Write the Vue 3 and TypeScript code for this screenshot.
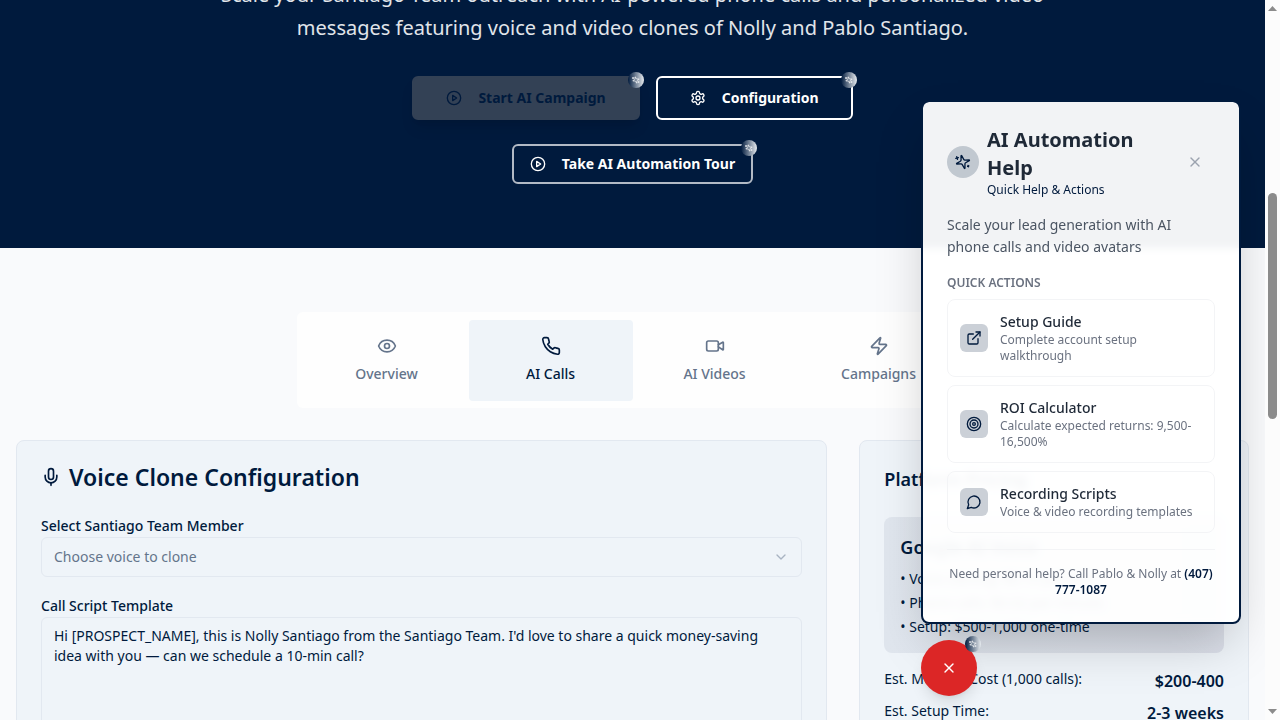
<script setup lang="ts">
import { ref } from 'vue'

interface Item {
  title: string
  detail: string
  icon: string[]
}

const icons: Record<string, string[]> = {
  play: ['M12 2a10 10 0 1 0 0 20 10 10 0 0 0 0-20Z', 'M10 8l6 4-6 4Z'],
  gear: [
    'M12.22 2h-.44a2 2 0 0 0-2 2v.18a2 2 0 0 1-1 1.73l-.43.25a2 2 0 0 1-2 0l-.15-.08a2 2 0 0 0-2.73.73l-.22.38a2 2 0 0 0 .73 2.73l.15.1a2 2 0 0 1 1 1.72v.51a2 2 0 0 1-1 1.74l-.15.09a2 2 0 0 0-.73 2.73l.22.38a2 2 0 0 0 2.73.73l.15-.08a2 2 0 0 1 2 0l.43.25a2 2 0 0 1 1 1.73V20a2 2 0 0 0 2 2h.44a2 2 0 0 0 2-2v-.18a2 2 0 0 1 1-1.73l.43-.25a2 2 0 0 1 2 0l.15.08a2 2 0 0 0 2.73-.73l.22-.39a2 2 0 0 0-.73-2.73l-.15-.08a2 2 0 0 1-1-1.74v-.5a2 2 0 0 1 1-1.74l.15-.09a2 2 0 0 0 .73-2.73l-.22-.38a2 2 0 0 0-2.73-.73l-.15.08a2 2 0 0 1-2 0l-.43-.25a2 2 0 0 1-1-1.73V4a2 2 0 0 0-2-2z',
    'M12 9a3 3 0 1 0 0 6 3 3 0 0 0 0-6Z',
  ],
  eye: [
    'M2.062 12.348a1 1 0 0 1 0-.696 10.75 10.75 0 0 1 19.876 0 1 1 0 0 1 0 .696 10.75 10.75 0 0 1-19.876 0',
    'M12 9a3 3 0 1 0 0 6 3 3 0 0 0 0-6Z',
  ],
  phone: [
    'M22 16.92v3a2 2 0 0 1-2.18 2 19.79 19.79 0 0 1-8.63-3.07 19.5 19.5 0 0 1-6-6 19.79 19.79 0 0 1-3.07-8.67A2 2 0 0 1 4.11 2h3a2 2 0 0 1 2 1.72 12.84 12.84 0 0 0 .7 2.81 2 2 0 0 1-.45 2.11L8.09 9.91a16 16 0 0 0 6 6l1.27-1.27a2 2 0 0 1 2.11-.45 12.84 12.84 0 0 0 2.81.7A2 2 0 0 1 22 16.92z',
  ],
  video: [
    'm16 13 5.223 3.482a.5.5 0 0 0 .777-.416V7.87a.5.5 0 0 0-.752-.432L16 10.5',
    'M4 6h10a2 2 0 0 1 2 2v8a2 2 0 0 1-2 2H4a2 2 0 0 1-2-2V8a2 2 0 0 1 2-2Z',
  ],
  zap: [
    'M4 14a1 1 0 0 1-.78-1.63l9.9-10.2a.5.5 0 0 1 .86.46l-1.92 6.02A1 1 0 0 0 13 10h7a1 1 0 0 1 .78 1.63l-9.9 10.2a.5.5 0 0 1-.86-.46l1.92-6.02A1 1 0 0 0 11 14z',
  ],
  mic: ['M12 2a3 3 0 0 0-3 3v7a3 3 0 0 0 6 0V5a3 3 0 0 0-3-3Z', 'M19 10v2a7 7 0 0 1-14 0v-2', 'M12 19v3'],
  external: ['M15 3h6v6', 'M10 14 21 3', 'M18 13v6a2 2 0 0 1-2 2H5a2 2 0 0 1-2-2V8a2 2 0 0 1 2-2h6'],
  target: [
    'M12 2a10 10 0 1 0 0 20 10 10 0 0 0 0-20Z',
    'M12 6a6 6 0 1 0 0 12 6 6 0 0 0 0-12Z',
    'M12 10a2 2 0 1 0 0 4 2 2 0 0 0 0-4Z',
  ],
  message: ['M7.9 20A9 9 0 1 0 4 16.1L2 22Z'],
  close: ['M18 6 6 18', 'm6 6 12 12'],
  chevron: ['m6 9 6 6 6-6'],
  sparkles: [
    'M9.937 15.5A2 2 0 0 0 8.5 14.063l-6.135-1.582a.5.5 0 0 1 0-.962L8.5 9.936A2 2 0 0 0 9.937 8.5l1.582-6.135a.5.5 0 0 1 .963 0L14.063 8.5A2 2 0 0 0 15.5 9.937l6.135 1.581a.5.5 0 0 1 0 .964L15.5 14.063a2 2 0 0 0-1.437 1.437l-1.582 6.135a.5.5 0 0 1-.963 0z',
    'M20 3v4',
    'M22 5h-4',
    'M4 17v2',
    'M5 18H3',
  ],
}

const tabs = [
  { label: 'Overview', icon: icons.eye },
  { label: 'AI Calls', icon: icons.phone },
  { label: 'AI Videos', icon: icons.video },
  { label: 'Campaigns', icon: icons.zap },
]
const activeTab = ref('AI Calls')

const actions: Item[] = [
  { title: 'Setup Guide', detail: 'Complete account setup walkthrough', icon: icons.external },
  { title: 'ROI Calculator', detail: 'Calculate expected returns: 9,500-16,500%', icon: icons.target },
  { title: 'Recording Scripts', detail: 'Voice & video recording templates', icon: icons.message },
]

const script = ref(
  "Hi [PROSPECT_NAME], this is Nolly Santiago from the Santiago Team. I'd love to share a quick money-saving idea with you — can we schedule a 10-min call?",
)
const voice = ref('')
</script>

<template>
  <div class="window">
    <div class="page">
      <section class="hero">
        <p class="lead">
          Scale your Santiago Team outreach with AI-powered phone calls and personalized video messages featuring voice
          and video clones of Nolly and Pablo Santiago.
        </p>
        <div class="hero-row">
          <button class="btn btn-start" type="button">
            <svg class="i16" viewBox="0 0 24 24"><path v-for="d in icons.play" :key="d" :d="d" /></svg>
            Start AI Campaign
            <span class="badge"><svg viewBox="0 0 24 24"><path v-for="d in icons.sparkles" :key="d" :d="d" /></svg></span>
          </button>
          <button class="btn btn-config" type="button">
            <svg class="i16" viewBox="0 0 24 24"><path v-for="d in icons.gear" :key="d" :d="d" /></svg>
            Configuration
            <span class="badge"><svg viewBox="0 0 24 24"><path v-for="d in icons.sparkles" :key="d" :d="d" /></svg></span>
          </button>
        </div>
        <button class="btn btn-tour" type="button">
          <svg class="i16" viewBox="0 0 24 24"><path v-for="d in icons.play" :key="d" :d="d" /></svg>
          Take AI Automation Tour
          <span class="badge"><svg viewBox="0 0 24 24"><path v-for="d in icons.sparkles" :key="d" :d="d" /></svg></span>
        </button>
      </section>

      <main class="main">
        <div class="tabs" role="tablist">
          <button
            v-for="tab in tabs"
            :key="tab.label"
            class="tab"
            :class="{ active: tab.label === activeTab }"
            type="button"
            role="tab"
            :aria-selected="tab.label === activeTab"
            @click="activeTab = tab.label"
          >
            <svg class="i20" viewBox="0 0 24 24"><path v-for="d in tab.icon" :key="d" :d="d" /></svg>
            {{ tab.label }}
          </button>
        </div>

        <div class="cards">
          <section class="card wide">
            <h2 class="card-title">
              <svg class="i20" viewBox="0 0 24 24"><path v-for="d in icons.mic" :key="d" :d="d" /></svg>
              Voice Clone Configuration
            </h2>
            <div class="field">
              <label for="voice">Select Santiago Team Member</label>
              <div class="select-wrap">
                <select id="voice" v-model="voice">
                  <option value="">Choose voice to clone</option>
                  <option value="nolly">Nolly Santiago</option>
                  <option value="pablo">Pablo Santiago</option>
                </select>
                <svg class="i16 chevron" viewBox="0 0 24 24"><path v-for="d in icons.chevron" :key="d" :d="d" /></svg>
              </div>
            </div>
            <div class="field">
              <label for="script">Call Script Template</label>
              <textarea id="script" v-model="script" rows="8"></textarea>
            </div>
          </section>

          <section class="card">
            <h3 class="side-title">Platform Pricing</h3>
            <div class="plan">
              <h4>Google AI Voice</h4>
              <ul>
                <li>• Voice cloning: $0.10 per min</li>
                <li>• Phone calls: $0.02 per minute</li>
                <li>• Setup: $500-1,000 one-time</li>
              </ul>
            </div>
            <dl class="facts">
              <div>
                <dt>Est. Monthly Cost (1,000 calls):</dt>
                <dd>$200-400</dd>
              </div>
              <div>
                <dt>Est. Setup Time:</dt>
                <dd>2-3 weeks</dd>
              </div>
            </dl>
          </section>
        </div>
      </main>

      <div class="assist">
        <aside class="panel">
          <header class="panel-head">
            <span class="avatar">
              <svg class="i16 tilt" viewBox="0 0 24 24"><path v-for="d in icons.sparkles" :key="d" :d="d" /></svg>
            </span>
            <div class="panel-heading">
              <h3>AI Automation Help</h3>
              <p>Quick Help &amp; Actions</p>
            </div>
            <button class="panel-close" type="button" aria-label="Close help">
              <svg class="i16" viewBox="0 0 24 24"><path v-for="d in icons.close" :key="d" :d="d" /></svg>
            </button>
          </header>
          <p class="panel-text">Scale your lead generation with AI phone calls and video avatars</p>
          <h4 class="panel-label">QUICK ACTIONS</h4>
          <div class="actions">
            <button v-for="a in actions" :key="a.title" class="action" type="button">
              <span class="action-icon">
                <svg class="i16" viewBox="0 0 24 24"><path v-for="d in a.icon" :key="d" :d="d" /></svg>
              </span>
              <span class="action-text">
                <span class="action-title">{{ a.title }}</span>
                <span class="action-detail">{{ a.detail }}</span>
              </span>
            </button>
          </div>
          <p class="panel-foot">Need personal help? Call Pablo &amp; Nolly at <strong>(407) 777-1087</strong></p>
        </aside>
        <button class="fab" type="button" aria-label="Close assistant">
          <svg class="i16" viewBox="0 0 24 24"><path v-for="d in icons.close" :key="d" :d="d" /></svg>
          <span class="badge"><svg viewBox="0 0 24 24"><path v-for="d in icons.sparkles" :key="d" :d="d" /></svg></span>
        </button>
      </div>
    </div>

    <div class="scrollbar" aria-hidden="true">
      <svg class="arrow" viewBox="0 0 9 5"><path d="M0 5 4.500 0 9 5Z" /></svg>
      <div class="track"><div class="thumb"></div></div>
      <svg class="arrow" viewBox="0 0 9 5"><path d="M0 0 4.500 5 9 0Z" /></svg>
    </div>
  </div>
</template>

<style>
body {
  margin: 0;
}
</style>

<style scoped>
* {
  box-sizing: border-box;
}
.window {
  display: grid;
  grid-template-columns: 1fr 15px;
  height: 100vh;
  overflow: hidden;
  font-family: 'Noto Sans', sans-serif;
  font-size: 14px;
  line-height: 20px;
  color: #001a3d;
}
.page {
  position: relative;
  overflow: hidden;
  background: #f9fafc;
}
h2,
h3,
h4,
p,
ul,
dl,
dd {
  margin: 0;
  padding: 0;
}
button {
  font-family: inherit;
  cursor: pointer;
}
svg {
  fill: none;
  stroke: currentColor;
  stroke-width: 2;
  stroke-linecap: round;
  stroke-linejoin: round;
  flex: none;
}
.i16 {
  width: 16px;
  height: 16px;
}
.i20 {
  width: 20px;
  height: 20px;
}

.hero {
  display: flex;
  flex-direction: column;
  align-items: center;
  padding: 0 16px 64px;
  background: #001a3d;
  color: #fff;
}
.lead {
  max-width: 896px;
  margin: -22px 0 32px;
  font-size: 20px;
  line-height: 33px;
  text-align: center;
  color: #e1e5ea;
}
.hero-row {
  display: flex;
  gap: 16px;
  margin-bottom: 24px;
}
.btn {
  position: relative;
  display: flex;
  align-items: center;
  gap: 16px;
  padding: 10px 32px;
  border: 2px solid #fff;
  border-radius: 6px;
  background: transparent;
  color: #fff;
  font-size: 14px;
  font-weight: 700;
  line-height: 20px;
}
.btn-start {
  border-color: #334155;
  background: #334155;
  color: #001a3d;
  box-shadow: 0 10px 15px -3px rgba(0, 0, 0, 0.1), 0 4px 6px -4px rgba(0, 0, 0, 0.1);
}
.btn-tour {
  padding: 8px 16px;
  border-color: #b2bac5;
}
.badge {
  position: absolute;
  top: -4px;
  right: -4px;
  display: flex;
  align-items: center;
  justify-content: center;
  width: 16px;
  height: 16px;
  border-radius: 50%;
  background: linear-gradient(90deg, #001a3d, #e8ecf0);
  color: #fff;
}
.btn .badge {
  top: -6px;
  right: -6px;
}
.badge svg {
  width: 8px;
  height: 8px;
  transform: rotate(-105deg);
}

.main {
  padding: 64px 16px;
}
.tabs {
  display: grid;
  grid-template-columns: repeat(4, 1fr);
  max-width: 672px;
  margin: 0 auto 32px;
  padding: 8px 8px 7px;
  border-radius: 6px;
  background: #fefefe;
}
.tab {
  display: flex;
  flex-direction: column;
  align-items: center;
  gap: 8px;
  padding: 16px 12px 17px;
  border: 0;
  border-radius: 4px;
  background: transparent;
  color: #64748b;
  font-size: 14px;
  font-weight: 500;
  line-height: 20px;
}
.tab.active {
  background: #eff4f9;
  color: #001a3d;
}

.cards {
  display: grid;
  grid-template-columns: repeat(3, minmax(0, 1fr));
  gap: 32px;
}
.card {
  padding: 24px;
  border: 1px solid #e2e8f0;
  border-radius: 8px;
  background: #eff4f9;
}
.wide {
  grid-column: span 2;
}
.card-title {
  display: flex;
  align-items: center;
  gap: 8px;
  margin-bottom: 24px;
  font-size: 23px;
  font-weight: 600;
  line-height: 24px;
}
.field {
  display: flex;
  flex-direction: column;
  margin-bottom: 16px;
}
.field label {
  padding-top: 2px;
  font-weight: 500;
  line-height: 22px;
}
.select-wrap {
  position: relative;
  display: flex;
}
select,
textarea {
  width: 100%;
  border: 1px solid #e2e8f0;
  border-radius: 6px;
  background: transparent;
  color: #001a3d;
  font-family: inherit;
  font-size: 14px;
  line-height: 20px;
}
select {
  height: 40px;
  padding: 0 12px;
  appearance: none;
  color: #64748b;
}
.chevron {
  position: absolute;
  top: 12px;
  right: 13px;
  color: #a8b3c2;
  pointer-events: none;
}
textarea {
  display: block;
  padding: 8px 12px;
  resize: none;
}
.side-title {
  margin-bottom: 24px;
  font-size: 18px;
  font-weight: 600;
  line-height: 28px;
}
.plan {
  margin-bottom: 16px;
  padding: 16px;
  border-radius: 8px;
  background: linear-gradient(90deg, #e0e6ee, #dbdfe9);
}
.plan h4 {
  margin-bottom: 8px;
  font-size: 18px;
  font-weight: 600;
  line-height: 28px;
}
.plan ul,
.facts {
  display: flex;
  flex-direction: column;
  gap: 4px;
  list-style: none;
}
.facts {
  gap: 8px;
}
.facts div {
  display: flex;
  justify-content: space-between;
}
.facts dd {
  font-size: 16px;
  font-weight: 600;
  line-height: 24px;
}

.assist {
  position: absolute;
  right: 24px;
  bottom: 24px;
  display: flex;
  flex-direction: column;
  align-items: flex-start;
  gap: 16px;
}
.panel {
  width: 320px;
  padding: 24px;
  border: 2px solid #001a3d;
  border-radius: 8px;
  background: rgba(255, 255, 255, 0.95);
  background-clip: padding-box;
  backdrop-filter: blur(4px);
  box-shadow: 0 25px 50px -12px rgba(0, 0, 0, 0.25);
}
.panel-head {
  display: flex;
  align-items: center;
  gap: 8px;
  margin-bottom: 16px;
}
.avatar {
  display: flex;
  align-items: center;
  justify-content: center;
  flex: none;
  width: 32px;
  height: 32px;
  border-radius: 50%;
  background: #c1c8d0;
}
.tilt {
  transform: rotate(-105deg);
}
.panel-heading {
  flex: 1;
}
.panel-heading h3 {
  font-size: 20px;
  font-weight: 700;
  line-height: 28px;
  color: #1f2937;
}
.panel-heading p {
  font-size: 12px;
  line-height: 16px;
}
.panel-close {
  display: flex;
  padding: 12px;
  border: 0;
  background: none;
  color: #9ca3af;
}
.panel-text {
  margin-bottom: 16px;
  line-height: 22px;
  color: #4b5563;
}
.panel-label {
  margin-bottom: 8px;
  font-size: 12px;
  font-weight: 600;
  line-height: 17px;
  color: #6b7280;
}
.actions {
  display: flex;
  flex-direction: column;
  gap: 8px;
}
.action {
  display: flex;
  align-items: center;
  gap: 12px;
  padding: 12px;
  border: 1px solid #f3f4f6;
  border-radius: 8px;
  background: transparent;
  text-align: left;
}
.action-icon {
  display: flex;
  padding: 6px;
  border-radius: 6px;
  background: #cbd0d7;
  color: #001a3d;
}
.action-text {
  display: flex;
  flex-direction: column;
}
.action-title {
  font-size: 14px;
  font-weight: 500;
  line-height: 20px;
  color: #1f2937;
}
.action-detail {
  font-size: 12px;
  line-height: 16px;
  color: #6b7280;
}
.panel-foot {
  margin-top: 16px;
  padding-top: 16px;
  border-top: 1px solid #f3f4f6;
  font-size: 12px;
  line-height: 16px;
  text-align: center;
  color: #6b7280;
}
.panel-foot strong {
  font-weight: 600;
  color: #001a3d;
}
.fab {
  position: relative;
  display: flex;
  align-items: center;
  justify-content: center;
  width: 56px;
  height: 56px;
  padding: 0;
  border: 0;
  border-radius: 50%;
  background: #dc2626;
  color: #fff;
  box-shadow: 0 10px 15px -3px rgba(0, 0, 0, 0.1), 0 4px 6px -4px rgba(0, 0, 0, 0.1);
}

.scrollbar {
  display: flex;
  flex-direction: column;
  align-items: center;
  padding: 6px 0;
  background: #fcfcfc;
}
.arrow {
  width: 9px;
  height: 5px;
  fill: #8b8b8b;
  stroke: none;
}
.track {
  display: grid;
  grid-template-rows: 182fr 226fr 290fr;
  flex: 1;
}
.thumb {
  grid-row: 2;
  width: 9px;
  border-radius: 5px;
  background: #8b8b8b;
}
</style>
